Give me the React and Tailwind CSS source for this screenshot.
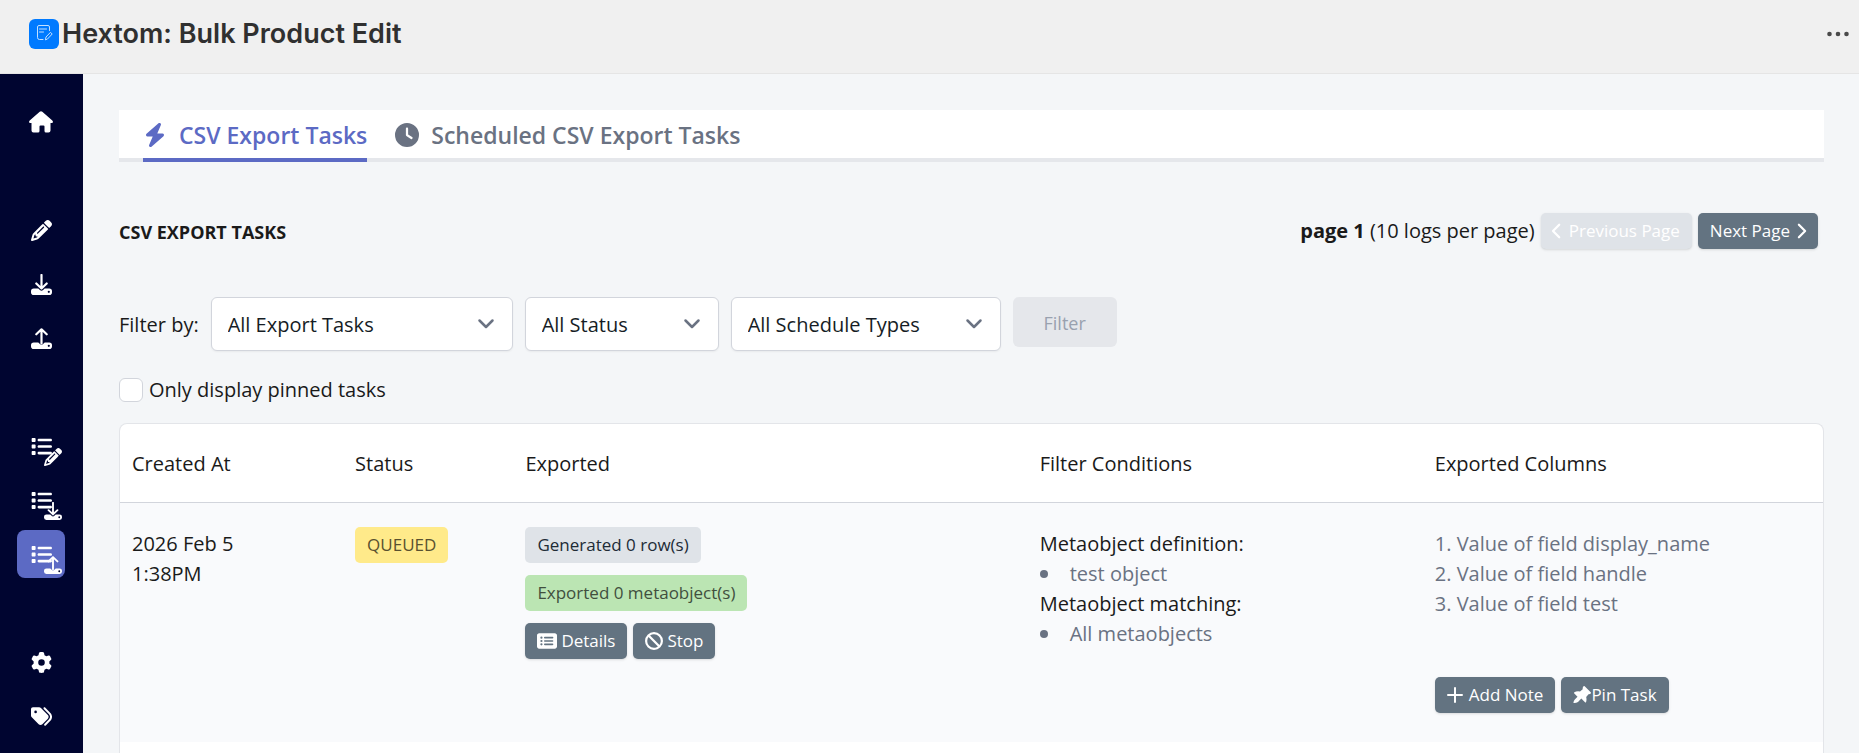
import React from "react";
import { FaPencil, FaList, FaGear, FaTags, FaRectangleList, FaBan, FaClock, FaBolt } from "react-icons/fa6";

/* Drive with an arrow, used for import (down) and export (up) */
const DriveIcon = ({ up, className }) => (
  <svg viewBox="0 0 21 21" className={className} fill="none" aria-hidden="true">
    <path
      d="M2.800 14.500h4.500l1.600 1.600q1.600 1.400 3.200 0l1.600-1.600h4.500a2.800 2.800 0 0 1 2.800 2.800v.9a2.800 2.800 0 0 1-2.800 2.800h-15.400a2.800 2.800 0 0 1-2.800-2.800v-.9a2.800 2.800 0 0 1 2.800-2.800z"
      fill="currentColor"
    />
    <circle cx="17.800" cy="17.800" r="1.100" fill="#000530" />
    <path
      d={up ? "M10.500 15.500V1.500M5.300 6.300l5.200-5 5.200 5" : "M10.500 1v13.500M5.300 9.500l5.200 5 5.200-5"}
      stroke="currentColor"
      strokeWidth="2.200"
      strokeLinecap="round"
      strokeLinejoin="round"
    />
  </svg>
);

const HomeIcon = () => (
  <svg viewBox="0 0 24 22" className="w-6 h-[22px]" fill="currentColor" aria-hidden="true">
    <path d="M10.700.8a2 2 0 0 1 2.600 0l10 8.600c1.200 1.100.6 2.600-.7 2.600h-1.100v7.500a2 2 0 0 1-2 2h-2.500a1.500 1.500 0 0 1-1.500-1.500v-4.500a1 1 0 0 0-1-1h-3a1 1 0 0 0-1 1V20a1.500 1.500 0 0 1-1.500 1.500H4.500a2 2 0 0 1-2-2V12H1.400C.1 12-.5 10.500.7 9.400z" />
  </svg>
);

const PinIcon = () => (
  <svg viewBox="0 0 18 17" className="h-[17px] w-[18px]" fill="currentColor" aria-hidden="true">
    <path d="M10.500.3q.6-.6 1.200 0l6 6q.6.700 0 1.300-.9.900-2.200.7l-2.300 2.800q.7 2.700-.2 5.200-.4.600-1 0l-3.700-3.700-3.300 3.300q-2.300 1.400-4.600 1 .2-2.300 1.400-3.400l2.700-2.700-3.200-3.300q-.6-.7.1-1.200 2.200-1.400 5.600-.8l2.700-2.300q-.2-1.900.8-2.900z" />
  </svg>
);

const ListWith = ({ children }) => (
  <span className="relative h-[21px] w-[21px]">
    <FaList className="h-[21px] w-[21px]" />
    <span className="absolute left-[13px] top-3">{children}</span>
  </span>
);

const Chevron = ({ d, className }) => (
  <svg viewBox="0 0 18 18" className={className} fill="none" stroke="currentColor" strokeWidth="2.500" strokeLinecap="round" strokeLinejoin="round" aria-hidden="true">
    <path d={d} />
  </svg>
);

const NavItem = ({ label, active, children }) => (
  <a
    href="#"
    aria-label={label}
    className={`h-12 w-12 rounded-lg flex items-center justify-center text-white ${active ? "bg-[#5c6ac4]" : ""}`}
  >
    {children}
  </a>
);

const Sidebar = () => (
  <nav className="w-[83px] shrink-0 bg-[#000530] pt-6 pr-px flex flex-col items-center gap-15">
    <NavItem label="Home">
      <HomeIcon />
    </NavItem>
    <div className="flex flex-col gap-1.5">
      <NavItem label="Edit">
        <FaPencil className="h-[21px] w-[21px]" />
      </NavItem>
      <NavItem label="Import">
        <DriveIcon className="h-[21px] w-[21px]" />
      </NavItem>
      <NavItem label="Export">
        <DriveIcon up className="h-[21px] w-[21px]" />
      </NavItem>
    </div>
    <div className="flex flex-col gap-1.5">
      <NavItem label="Edit tasks">
        <ListWith>
          <FaPencil className="h-[18px] w-[18px]" />
        </ListWith>
      </NavItem>
      <NavItem label="Import tasks">
        <ListWith>
          <DriveIcon className="h-[18px] w-[18px]" />
        </ListWith>
      </NavItem>
      <NavItem label="Export tasks" active>
        <ListWith>
          <DriveIcon up className="h-[18px] w-[18px]" />
        </ListWith>
      </NavItem>
    </div>
    <div className="flex flex-col gap-1.5">
      <NavItem label="Settings">
        <FaGear className="h-[21px] w-[21px]" />
      </NavItem>
      <NavItem label="Pricing">
        <FaTags className="h-[21px] w-[21px]" />
      </NavItem>
    </div>
  </nav>
);

const Button = ({ disabled, children }) => (
  <button
    type="button"
    disabled={disabled}
    className={`h-9 px-3 inline-flex items-center gap-1 rounded-[5px] text-[17px] text-white whitespace-nowrap shadow-sm ${
      disabled ? "bg-[#dfe3e8]" : "bg-[#637381]"
    }`}
  >
    {children}
  </button>
);

const Select = ({ id, label, value, className }) => (
  <div className={`relative ${className}`}>
    <select
      id={id}
      aria-label={label}
      className="h-[54px] w-full appearance-none rounded-md border border-[#d2d5dc] bg-white pl-4 pr-12 pt-0.5 text-[#161d25] shadow-xs"
    >
      <option>{value}</option>
    </select>
    <Chevron d="M2.500 5.500l6.500 6.500 6.500-6.500" className="pointer-events-none absolute right-[18px] top-[18px] h-[18px] w-[18px] text-gray-500" />
  </div>
);

const Bullets = ({ items }) => (
  <ul className="text-gray-500">
    {items.map((item) => (
      <li key={item} className="flex items-center gap-[22px] before:h-2 before:w-2 before:rounded-full before:bg-current">
        {item}
      </li>
    ))}
  </ul>
);

const columns = [
  { name: "Created At", width: "w-[13.1%]" },
  { name: "Status", width: "w-[10%]" },
  { name: "Exported", width: "w-[30.2%]" },
  { name: "Filter Conditions", width: "w-[23.2%]" },
  { name: "Exported Columns", width: "w-[23.5%]" },
];

const TasksTable = () => (
  <div className="mt-[18px] overflow-hidden rounded-t-lg border border-b-0 border-[#e3e5e9] bg-white">
    <table className="w-full table-fixed text-left">
      <thead>
        <tr className="h-[78px] border-b border-[#d2d5dc]">
          {columns.map((col) => (
            <th key={col.name} className={`px-3 pt-0.5 font-normal ${col.width}`}>
              {col.name}
            </th>
          ))}
        </tr>
      </thead>
      <tbody>
        <tr className="h-60 bg-[#f9fafc] align-top">
          <td className="px-3 pt-[26px]">
            2026 Feb 5
            <br />
            1:38PM
          </td>
          <td className="px-3 pt-6">
            <span className="inline-flex h-9 items-center rounded-[5px] bg-[#ffea8a] px-3 text-[17px] text-[#595130]">QUEUED</span>
          </td>
          <td className="px-3 pt-6">
            <div className="flex flex-col items-start gap-3">
              <span className="flex h-9 items-center rounded-[5px] bg-[#dfe3e8] px-3 text-[17px] text-[#212b36]">Generated 0 row(s)</span>
              <span className="flex h-9 items-center rounded-[5px] bg-[#bbe5b3] px-3 text-[17px] text-[#414f3e]">Exported 0 metaobject(s)</span>
              <div className="flex gap-1.5">
                <Button>
                  <FaRectangleList className="h-5 w-5" />
                  Details
                </Button>
                <Button>
                  <FaBan className="h-[18px] w-[18px]" />
                  Stop
                </Button>
              </div>
            </div>
          </td>
          <td className="px-3 pt-[26px]">
            <p>Metaobject definition:</p>
            <Bullets items={["test object"]} />
            <p>Metaobject matching:</p>
            <Bullets items={["All metaobjects"]} />
          </td>
          <td className="px-3 pt-[26px]">
            <div className="text-gray-500">
              <p>1. Value of field display_name</p>
              <p>2. Value of field handle</p>
              <p>3. Value of field test</p>
            </div>
            <div className="mt-[58px] flex gap-1.5">
              <Button>
                <svg viewBox="0 0 16 16" className="mr-0.5 h-4 w-4" stroke="currentColor" strokeWidth="2" strokeLinecap="round" aria-hidden="true">
                  <path d="M8 1v14M1 8h14" />
                </svg>
                Add Note
              </Button>
              <Button>
                <span className="flex items-center">
                  <PinIcon />
                  Pin Task
                </span>
              </Button>
            </div>
          </td>
        </tr>
      </tbody>
    </table>
    <div className="h-15 bg-white" />
  </div>
);

const App = () => {
  return (
    <div className="flex h-screen flex-col overflow-hidden bg-[#f4f6f8] font-['Open_Sans','Noto_Sans',sans-serif] text-[20px] leading-[30px] text-[#1a1a1a]">
      <header className="flex h-[74px] shrink-0 items-start justify-between border-b border-[#e5e5e5] bg-[#f0f0f0] pl-[29px] pr-2.5 pt-[19px]">
        <div className="flex items-center gap-[3px]">
          <svg viewBox="0 0 30 30" className="h-[30px] w-[30px]" fill="none" aria-hidden="true">
            <rect width="30" height="30" rx="6" fill="#007aff" />
            <g stroke="#c4e0ff" strokeWidth="1" strokeLinecap="round" strokeLinejoin="round">
              <path d="M20.500 11.500V8q0-1.500-1.500-1.500h-9Q8.500 6.500 8.500 8v10.500q0 2 2 2H14" />
              <path d="M10.500 10h7M10.500 13h4M16.500 20.500l.5-2.500 4.500-4.700 1.700 1.700-4.500 4.800z" />
            </g>
          </svg>
          <h1 className="font-['Inter',sans-serif] text-[27px] font-semibold leading-[30px] text-[#303030]">Hextom: Bulk Product Edit</h1>
        </div>
        <button type="button" aria-label="More actions" className="flex h-[30px] items-center text-[#4a4a4a]">
          <svg viewBox="0 0 22 6" className="h-1.5 w-[22px]" fill="currentColor" aria-hidden="true">
            <circle cx="2.500" cy="3" r="2.300" />
            <circle cx="11" cy="3" r="2.300" />
            <circle cx="19.500" cy="3" r="2.300" />
          </svg>
        </button>
      </header>

      <div className="flex min-h-0 flex-1">
        <Sidebar />

        <main className="min-w-0 flex-1 pl-9 pr-[35px] pt-9">
          <div className="flex h-[52px] gap-7 border-b-4 border-gray-200 bg-white pl-6 text-[23px] font-semibold">
            <a href="#" className="flex h-[52px] items-center gap-3 border-b-4 border-[#5c6ac4] pt-0.5 text-[#5c6ac4]">
              <FaBolt className="h-6 w-6" />
              CSV Export Tasks
            </a>
            <a href="#" className="flex h-[52px] items-center gap-3 border-b-4 border-transparent pt-0.5 text-gray-500">
              <FaClock className="h-6 w-6" />
              Scheduled CSV Export Tasks
            </a>
          </div>

          <div className="mt-[51px] flex items-center justify-between pr-1.5">
            <h2 className="pt-0.5 text-[18px] font-bold">CSV EXPORT TASKS</h2>
            <div className="flex items-center gap-1.5">
              <span>
                <b>page 1</b> (10 logs per page)
              </span>
              <Button disabled>
                <Chevron d="M11.500 2l-7 7 7 7" className="-ml-1 h-[18px] w-4" />
                Previous Page
              </Button>
              <Button>
                Next Page
                <Chevron d="M5.500 2l7 7-7 7" className="-mr-1 h-[18px] w-4" />
              </Button>
            </div>
          </div>

          <div className="mt-12 flex items-start gap-3">
            <span className="pt-[13px]">Filter by:</span>
            <Select id="type" label="Export tasks" value="All Export Tasks" className="w-[302px]" />
            <Select id="status" label="Status" value="All Status" className="w-[194px]" />
            <Select id="schedule" label="Schedule types" value="All Schedule Types" className="w-[270px]" />
            <button type="button" disabled className="h-[50px] w-[104px] rounded-md bg-gray-200 pt-0.5 text-[18px] text-gray-400">
              Filter
            </button>
          </div>

          <div className="mt-6 flex items-center gap-1.5">
            <input id="pinned" type="checkbox" className="h-6 w-6 appearance-none rounded-md border border-[#d2d5dc] bg-white" />
            <label htmlFor="pinned">Only display pinned tasks</label>
          </div>

          <TasksTable />
        </main>
      </div>
    </div>
  );
};

export default App;
